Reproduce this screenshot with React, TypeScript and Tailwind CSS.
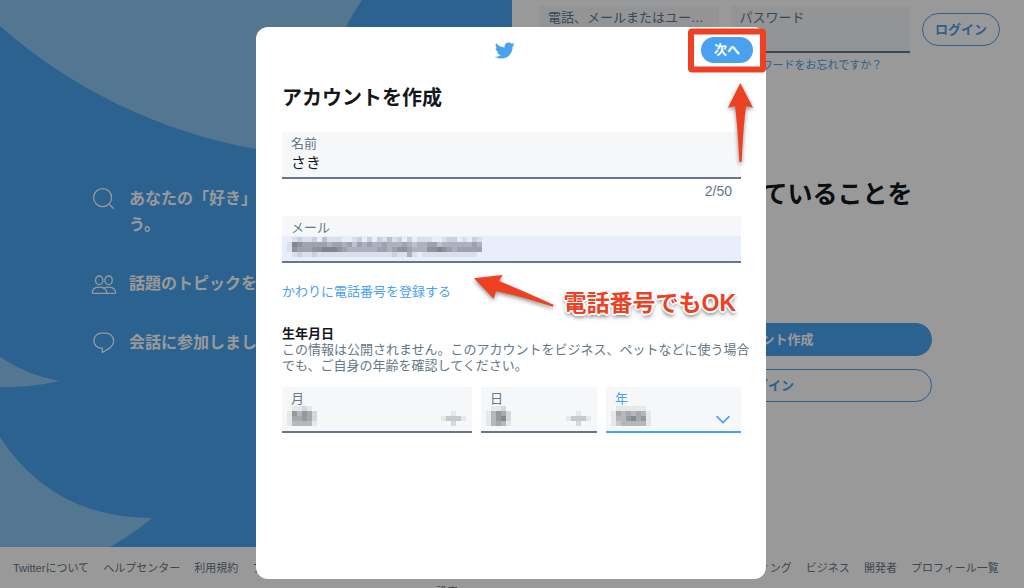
import React, { useState } from 'react';

const features = [
  { icon: 'search', text: 'あなたの「好き」をフォローしましょう。' },
  { icon: 'people', text: '話題のトピックを追いかけましょう。' },
  { icon: 'bubble', text: '会話に参加しましょう。' },
];

const footerLinks = [
  'Twitterについて', 'ヘルプセンター', '利用規約', 'プライバシーポリシー', 'Cookie', '広告情報', 'ブログ',
  'ステータス', '採用情報', 'ブランド', 'マーケティング', 'ビジネス', '開発者', 'プロフィール一覧',
];

// Each digit is the darkness of one 5px block
const emailMosaic = [
  '012112031110012020213120201110012201021',
  '176555554554535454454445434455344444454',
  '165556677765444444554566544466765455555',
  '012112111111111111111211410111111111110',
];
const monthMosaic = ['01121000', '16465200', '15565200', '14444100'];
const dayMosaic = ['0112000', '1465200', '1467200', '1454100'];
const yearMosaic = ['01111110', '15454541', '14467561', '13444441'];
const arrowMosaic = ['00000', '00100', '13331', '00200'];

function Mosaic({ rows, className }: { rows: string[]; className: string }) {
  const width = rows[0].length * 5;
  return (
    <svg
      aria-hidden="true"
      width={width}
      height={20}
      shapeRendering="crispEdges"
      className={`absolute pointer-events-none ${className}`}
    >
      {rows.map((row, y) =>
        row.split('').map((level, x) => (
          <rect
            key={`${x}-${y}`}
            x={x * 5}
            y={y * 5}
            width={5}
            height={5}
            fill="#22262d"
            fillOpacity={Number(level) * 0.075}
          />
        ))
      )}
    </svg>
  );
}

function FeatureIcon({ name }: { name: string }) {
  return (
    <svg viewBox="0 0 26 26" className="w-[26px] h-[26px] shrink-0" fill="none" stroke="currentColor" strokeWidth="1.3" strokeLinecap="round" strokeLinejoin="round">
      {name === 'search' && (
        <>
          <circle cx="11.6" cy="11.6" r="9" />
          <path d="M18.2 18.2 L22.3 22.3" />
        </>
      )}
      {name === 'people' && (
        <>
          <ellipse cx="8.2" cy="9.3" rx="3.7" ry="4.3" />
          <ellipse cx="17.6" cy="9.3" rx="3.7" ry="4.3" />
          <path d="M1.2 21.3 C1.6 18 4.6 16.1 8.2 16.1 C12.2 16.1 15.4 18 15.8 21.3 C15.8 22 15.5 22.3 15 22.3 H2 C1.5 22.3 1.2 22 1.2 21.3 Z" />
          <path d="M12.6 17.2 C14 16.4 15.8 16.1 17.6 16.1 C21.2 16.1 24.2 18 24.6 21.3 C24.6 22 24.3 22.3 23.8 22.3 H15" />
        </>
      )}
      {name === 'bubble' && (
        <path d="M10.5 3.2 H14.7 C19.2 3.2 22.6 6.5 22.6 10.8 C22.6 14.4 20.8 16.6 17.8 18.6 L11.3 22.5 V18.2 H10.5 C6.2 18.2 2.9 15 2.9 10.8 C2.9 6.5 6.2 3.2 10.5 3.2 Z" />
      )}
    </svg>
  );
}

function TwitterBird() {
  return (
    <svg viewBox="0 0 24 24" className="w-[21px] h-[21px] mr-[14px] text-[#4aa1ee]" fill="currentColor" aria-label="Twitter">
      <path d="M23.643 4.937c-.835.37-1.732.62-2.675.733.962-.576 1.7-1.49 2.048-2.578-.9.534-1.897.922-2.958 1.13-.85-.904-2.06-1.47-3.4-1.47-2.572 0-4.658 2.086-4.658 4.66 0 .364.042.718.12 1.06-3.873-.195-7.304-2.05-9.602-4.868-.4.69-.63 1.49-.63 2.342 0 1.616.823 3.043 2.072 3.878-.764-.025-1.482-.234-2.11-.583v.06c0 2.257 1.605 4.14 3.737 4.568-.392.106-.803.162-1.227.162-.3 0-.593-.028-.877-.082.593 1.85 2.313 3.198 4.352 3.234-1.595 1.25-3.604 1.995-5.786 1.995-.376 0-.747-.022-1.112-.065 2.062 1.323 4.51 2.093 7.14 2.093 8.57 0 13.255-7.098 13.255-13.254 0-.2-.005-.402-.014-.602.91-.658 1.7-1.477 2.323-2.41z" />
    </svg>
  );
}

function LoginField({ label, type }: { label: string; type: string }) {
  return (
    <label className="block h-[47px] bg-[#f5f7f9] border-b-2 border-[#657786] px-[9px] pt-1">
      <span className="block truncate text-[13px] leading-4 text-[#657786]">{label}</span>
      <input type={type} className="block w-full h-5 bg-transparent outline-none text-[15px]" />
    </label>
  );
}

function DateSelect({ label, mosaic, active = false }: { label: string; mosaic: string[]; active?: boolean }) {
  return (
    <label className={`relative block h-[46px] bg-[#f5f7f9] border-b-2 px-[9px] pt-1 ${active ? 'border-[#4aa1ee]' : 'border-[#657786]'}`}>
      <span className={`block text-[13px] leading-4 ${active ? 'text-[#4aa1ee]' : 'text-[#657786]'}`}>{label}</span>
      <select className="block w-full h-5 appearance-none bg-transparent outline-none text-[15px]">
        <option value="" />
      </select>
      <Mosaic rows={mosaic} className="left-[5px] top-[19px]" />
      {active ? (
        <svg viewBox="0 0 16 10" className="absolute right-[10px] top-[28px] w-4 h-[10px] pointer-events-none" fill="none" stroke="#4aa1ee" strokeWidth="1.6" strokeLinecap="round" strokeLinejoin="round">
          <path d="M2 1.6 L8 7.6 L14 1.6" />
        </svg>
      ) : (
        <Mosaic rows={arrowMosaic} className="right-[6px] top-[19px]" />
      )}
    </label>
  );
}

function Annotations() {
  return (
    <div className="absolute inset-0 pointer-events-none">
      <svg width="510" height="552" className="absolute right-0 top-0 overflow-visible">
        <g fill="#ee4023" className="drop-shadow-[0_2px_2px_rgba(0,0,0,0.45)]">
          <path d="M484.3 56 L497 80.8 L490 79 C487.5 98 486.5 118 485.7 134.5 Q484.5 136 483.3 134.5 C482.5 118 481.5 98 479 79 L472 80.8 Z" />
          <path d="M218 251.3 L246.5 248 L243 254 C262 262 280 270 297.5 277.8 L297 279.8 C278 274 259 268 240 264 L237.7 271.8 Z" />
        </g>
        <rect x="435" y="4.5" width="72" height="38" rx="1" fill="none" stroke="#ee4023" strokeWidth="6" strokeLinejoin="round" />
      </svg>
      <p className="absolute right-[30px] top-[260px] text-[23px] leading-8 font-bold whitespace-nowrap text-[#ee4023] [text-shadow:-2px_0_0_#fff,2px_0_0_#fff,0_-2px_0_#fff,0_2px_0_#fff,-1px_-1px_0_#fff,1px_-1px_0_#fff,-1px_1px_0_#fff,1px_1px_0_#fff,0_3px_4px_rgba(0,0,0,0.7)]">
        電話番号でもOK
      </p>
    </div>
  );
}

function SignupModal() {
  const [name, setName] = useState('さき');
  const [email, setEmail] = useState('');

  return (
    <div role="dialog" aria-label="アカウントを作成" className="relative w-full max-w-[510px] min-h-[552px] bg-white rounded-xl">
      {/* Header */}
      <div className="grid grid-cols-[1fr_auto_1fr] items-center h-[46px] px-[13px]">
        <span />
        <TwitterBird />
        <div className="flex justify-end">
          <button className="w-[52px] h-[26px] rounded-full bg-[#4aa1ee] text-white text-[13px] font-bold">次へ</button>
        </div>
      </div>

      <form className="pl-[26px] pr-[25px]" onSubmit={(e) => e.preventDefault()}>
        <h1 className="mt-[9px] text-[20px] leading-8 font-bold text-[#14171a]">アカウントを作成</h1>

        <label className="block h-[47px] mt-[18px] bg-[#f5f7f9] border-b-2 border-[#657786] px-[9px] pt-1">
          <span className="block text-[13px] leading-4 text-[#657786]">名前</span>
          <input
            value={name}
            maxLength={50}
            onChange={(e) => setName(e.target.value)}
            className="block w-full h-[22px] bg-transparent outline-none text-[15px] text-[#14171a]"
          />
        </label>
        <div className="pr-[9px] pt-1 text-right text-[14px] leading-4 text-[#657786]">{`${name.length}/50`}</div>

        <label className="relative block h-[47px] mt-[17px] bg-[#f5f7f9] border-b-2 border-[#657786] pt-1">
          <span className="block px-[9px] text-[13px] leading-4 text-[#657786]">メール</span>
          <input
            type="email"
            value={email}
            onChange={(e) => setEmail(e.target.value)}
            className="block w-full h-[25px] px-[9px] bg-[#e8eefc] outline-none text-[15px] text-[#14171a]"
          />
          <Mosaic rows={emailMosaic} className="left-[5px] top-[21px]" />
        </label>

        <a href="#phone" className="block w-fit mt-[21px] text-[13px] leading-4 text-[#4aa1ee]">かわりに電話番号を登録する</a>

        <h2 className="mt-[26px] text-[13px] leading-4 font-bold text-[#14171a]">生年月日</h2>
        <p className="text-[13px] leading-4 whitespace-nowrap text-[#657786]">
          この情報は公開されません。このアカウントをビジネス、ペットなどに使う場合
          <br />
          でも、ご自身の年齢を確認してください。
        </p>

        <div className="grid grid-cols-[190fr_116fr_135fr] gap-[9px] mt-[13px]">
          <DateSelect label="月" mosaic={monthMosaic} />
          <DateSelect label="日" mosaic={dayMosaic} />
          <DateSelect label="年" mosaic={yearMosaic} active />
        </div>
      </form>

      <Annotations />
    </div>
  );
}

export default function App() {
  return (
    <div className="h-screen flex flex-col overflow-hidden bg-white font-['Liberation_Sans','Noto_Sans_CJK_JP',sans-serif]">
      <div className="flex-1 min-h-0 grid grid-cols-2">
        {/* Left panel */}
        <section className="relative flex items-center justify-center pb-[5px] bg-[#48a3f0] text-white overflow-hidden">
          <svg viewBox="0 0 512 547" preserveAspectRatio="xMinYMin slice" className="absolute inset-0 w-full h-full" fill="#8ac6f0">
            <path d="M0 0 H362 Q353 13 346 27 C326 66 292 110 256 149 C160 132 70 88 0 26 Z" />
            <path d="M0 357 Q27 375 59 381 Q30 388 0 387 Z" />
            <path d="M0 437 C34 489 84 518 152 518 Q133 534 110 547 H0 Z" />
          </svg>
          <ul className="relative w-full max-w-[330px] flex flex-col gap-[33px]">
            {features.map((item) => (
              <li key={item.icon} className="flex gap-3 text-[16px] leading-[26px] font-bold">
                <FeatureIcon name={item.icon} />
                <span>{item.text}</span>
              </li>
            ))}
          </ul>
        </section>

        {/* Right panel */}
        <section className="flex flex-col">
          <form className="flex gap-3 pl-[27px] pr-6 pt-[6px]" onSubmit={(e) => e.preventDefault()}>
            <div className="flex-1 min-w-0">
              <LoginField label="電話、メールまたはユーザー名" type="text" />
            </div>
            <div className="flex-1 min-w-0">
              <LoginField label="パスワード" type="password" />
              <a href="#forgot" className="block pt-1 pl-[9px] text-[11px] leading-4 whitespace-nowrap text-[#4aa1ee]">
                パスワードをお忘れですか？
              </a>
            </div>
            <button className="mt-[7px] w-[78px] h-[33px] rounded-full border border-[#4aa1ee] text-[#4aa1ee] text-[13px] font-bold">
              ログイン
            </button>
          </form>

          <div className="w-full max-w-[327px] mx-auto mt-[105px]">
            <h2 className="pl-2 text-[25px] leading-8 font-bold text-[#14171a] whitespace-nowrap">
              「いま」起きていることを
              <br />
              見つけよう
            </h2>
            <p className="mt-[49px] text-[13px] leading-4 font-bold text-[#14171a]">Twitterをはじめよう</p>
            <button className="block w-full h-[33px] mt-4 rounded-full bg-[#48a3f0] text-white text-[13px] font-bold">アカウント作成</button>
            <button className="block w-full h-[33px] mt-[13px] rounded-full border border-[#4aa1ee] text-[#4aa1ee] text-[13px] font-bold">ログイン</button>
          </div>
        </section>
      </div>

      <footer className="h-[41px] shrink-0 overflow-hidden px-[13px] pt-[13px] text-[11px] leading-4 text-[#657786]">
        <nav className="flex justify-between whitespace-nowrap pr-3">
          {footerLinks.map((link) => (
            <a key={link} href="#footer">{link}</a>
          ))}
        </nav>
        <div className="flex justify-center gap-9 mt-2">
          <a href="#settings">設定</a>
          <span>© 2020 Twitter, Inc.</span>
        </div>
      </footer>

      <div className="fixed inset-0 flex items-start justify-center pt-[27px] pr-[2px] bg-black/40">
        <SignupModal />
      </div>
    </div>
  );
}
